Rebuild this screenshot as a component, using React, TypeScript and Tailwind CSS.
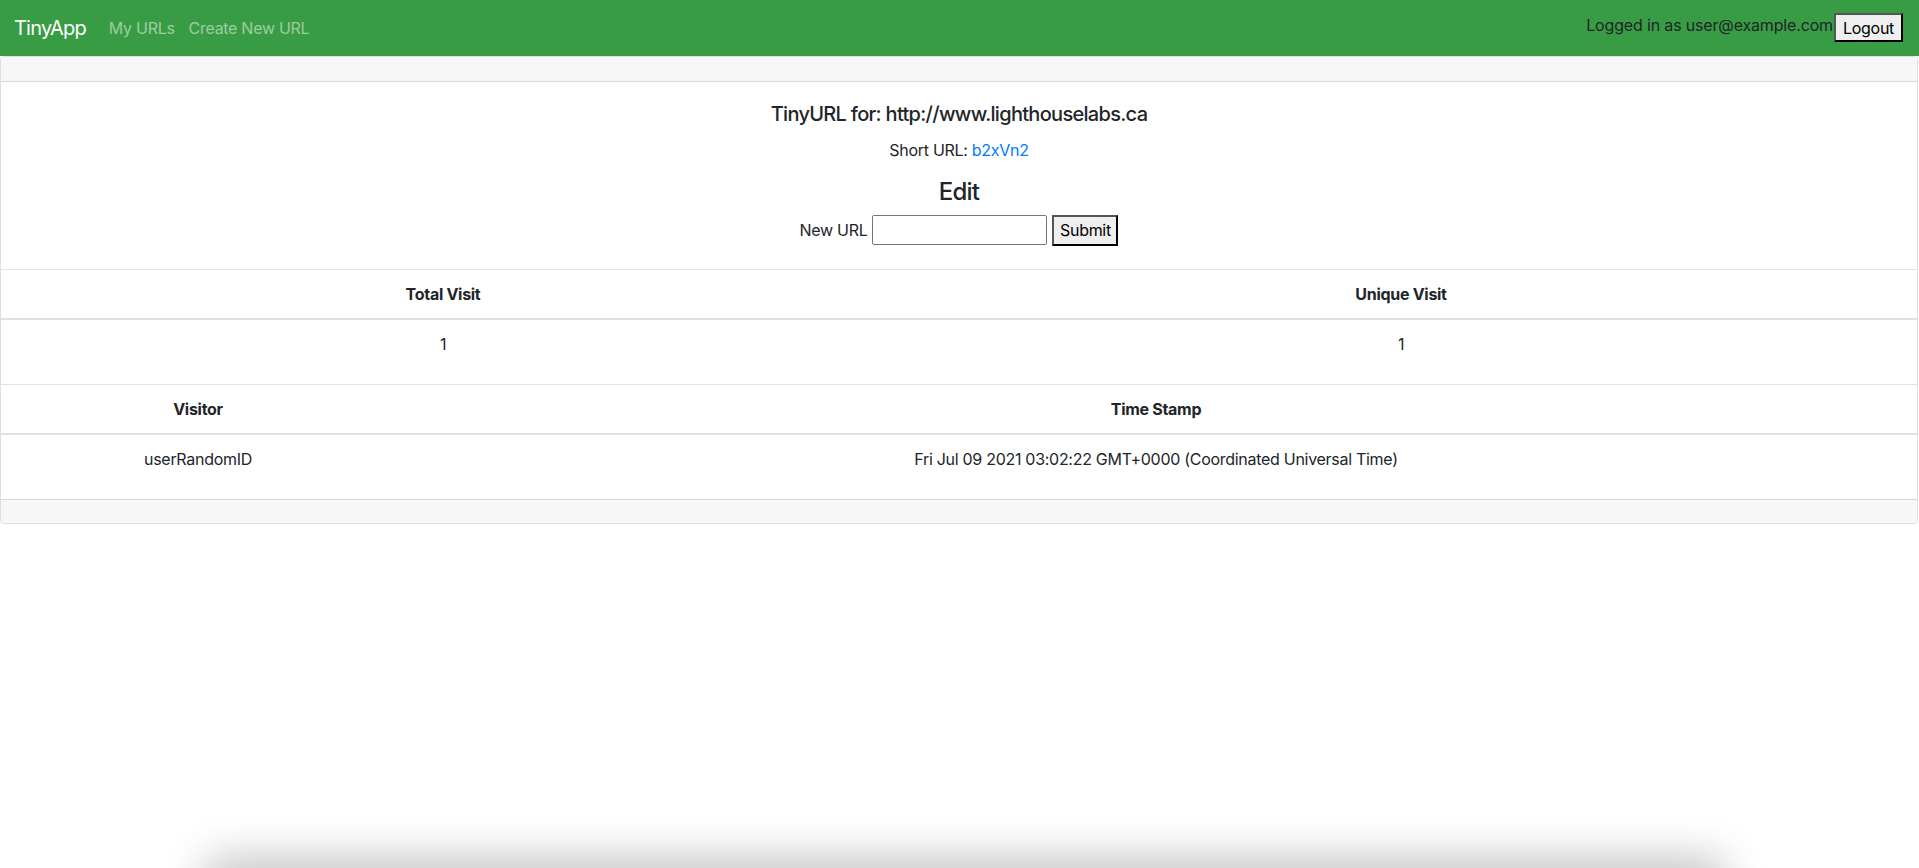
// TinyApp — URL詳細ページ
import React from "react"

const th = "p-3 leading-6 font-bold text-center border-t border-b-2 border-[#dee2e6]"
const td = "p-3 leading-6 text-center"

export default function App() {
  return (
    <div className="relative h-[868px] overflow-hidden bg-white text-[#212529] text-base tracking-[-0.018em] font-['Inter','Liberation_Sans',sans-serif]">
      {/* ナビバー */}
      <nav className="h-14 bg-[#389c44] flex items-center pl-[14px] pr-4">
        <span className="text-white text-xl leading-[30px] mr-[15px] tracking-[-0.04em]">TinyApp</span>
        <a className="px-2 leading-6 text-white/50">My URLs</a>
        <a className="pl-[6px] pr-2 leading-6 text-white/50">Create New URL</a>
        <div className="ml-auto self-start mt-[13px] flex items-start">
          <span className="leading-6 tracking-[-0.01em]">Logged in as user@example.com</span>
          <button
            type="button"
            className="h-[29px] px-[7px] ml-[1px] bg-[#efefef] border-2 [border-style:outset] border-[#555] text-black leading-5"
          >
            Logout
          </button>
        </div>
      </nav>

      {/* カード */}
      <div className="mr-px border border-black/[.125] rounded-[4px] overflow-hidden">
        <div className="h-[25px] bg-[#f7f7f7] border-b border-black/[.125]" />

        <div className="px-5 pt-5 pb-[23px] text-center">
          <h5 className="text-xl leading-[1.2] font-medium mb-3 tracking-[-0.035em]">TinyURL for: http://www.lighthouselabs.ca</h5>
          <p className="mb-4 leading-6">
            Short URL: <a className="text-[#007bff]">b2xVn2</a>
          </p>
          <h4 className="text-2xl leading-[1.2] font-medium mb-2 tracking-[-0.03em]">Edit</h4>
          <form className="flex justify-center items-center gap-[5px] h-[31px]" onSubmit={e => e.preventDefault()}>
            <label className="leading-6">New URL</label>
            <input type="text" className="w-[175px] h-[30px] border border-[#767676] rounded-[2px] px-1 bg-white" />
            <button
              type="submit"
              className="w-[66px] h-[31px] bg-[#efefef] border-2 [border-style:outset] border-[#555] text-black leading-5"
            >
              Submit
            </button>
          </form>
        </div>

        {/* 訪問数 */}
        <table className="w-full border-collapse mb-4">
          <thead>
            <tr>
              <th className={`${th} w-[884px]`}>Total Visit</th>
              <th className={th}>Unique Visit</th>
            </tr>
          </thead>
          <tbody>
            <tr>
              <td className={td}>1</td>
              <td className={td}>1</td>
            </tr>
          </tbody>
        </table>

        {/* 訪問履歴 */}
        <table className="w-full border-collapse mb-4">
          <thead>
            <tr>
              <th className={`${th} w-[394px]`}>Visitor</th>
              <th className={th}>Time Stamp</th>
            </tr>
          </thead>
          <tbody>
            <tr>
              <td className={td}>userRandomID</td>
              <td className={td}>Fri Jul 09 2021 03:02:22 GMT+0000 (Coordinated Universal Time)</td>
            </tr>
          </tbody>
        </table>

        <div className="h-[24px] bg-[#f7f7f7] border-t border-black/[.125]" />
      </div>

      {/* 下端の影 */}
      <div className="absolute left-[215px] right-[205px] top-[868px] h-10 rounded-lg shadow-[0_0_40px_12px_rgba(0,0,0,0.22)]" />
    </div>
  )
}
